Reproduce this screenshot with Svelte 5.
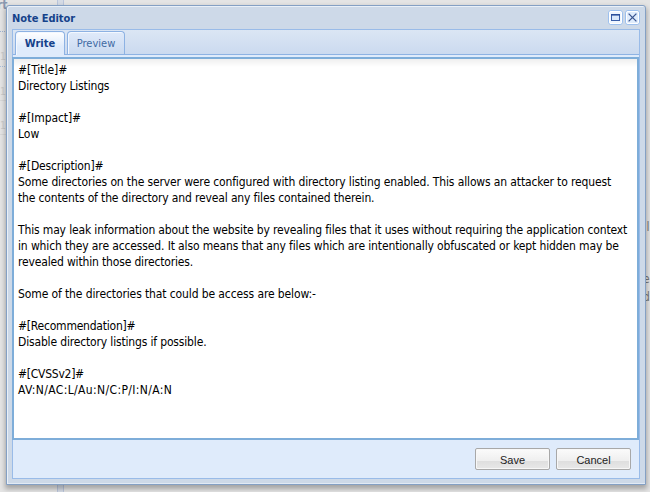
<script>
  // Each line carries the tracking that keeps its advance close to Tahoma's.
  const lines = [
    ['#[Title]#', -0.05],
    ['Directory Listings', -0.17],
    ['', 0],
    ['#[Impact]#', -0.08],
    ['Low', 0],
    ['', 0],
    ['#[Description]#', -0.18],
    ['Some directories on the server were configured with directory listing enabled. This allows an attacker to request', -0.132],
    ['the contents of the directory and reveal any files contained therein.', -0.145],
    ['', 0],
    ['This may leak information about the website by revealing files that it uses without requiring the application context', -0.143],
    ['in which they are accessed. It also means that any files which are intentionally obfuscated or kept hidden may be', -0.13],
    ['revealed within those directories.', -0.16],
    ['', 0],
    ['Some of the directories that could be access are below:-', -0.11],
    ['', 0],
    ['#[Recommendation]#', -0.22],
    ['Disable directory listings if possible.', -0.16],
    ['', 0],
    ['#[CVSSv2]#', -0.25],
    ['AV:N/AC:L/Au:N/C:P/I:N/A:N', 0.37]
  ];
</script>

<div class="page">
  <div class="behind">
    <div class="sidebar">
      <div class="heading">rt</div>
      <div class="row first">11</div>
      <div class="row">11</div>
      <div class="row">12</div>
    </div>
    <div class="splitter"></div>
    <div class="content">
      <span class="cut one">.ll</span>
      <span class="cut two">e</span>
      <span class="cut three">d</span>
    </div>
  </div>

  <div class="window">
    <header>
      <h1>Note Editor</h1>
      <div class="tools">
        <svg width="15" height="15" viewBox="0 0 15 15">
          <rect x=".5" y=".5" width="14" height="14" rx="2.5" fill="#eff6ff" stroke="#9dc0ee" />
          <rect x="1.5" y="1.5" width="12" height="12" rx="1.5" fill="none" stroke="#fff" />
          <rect x="3.5" y="4.5" width="8" height="6" fill="#d9e8fb" stroke="#3a5ea8" />
          <path d="M3 4.8h9" stroke="#2b4f9c" stroke-width="1.6" />
        </svg>
        <svg width="15" height="15" viewBox="0 0 15 15">
          <rect x=".5" y=".5" width="14" height="14" rx="2.5" fill="#dfecfc" stroke="#9dc0ee" />
          <rect x="1.5" y="1.5" width="12" height="12" rx="1.5" fill="none" stroke="#fff" />
          <path d="M3.6 3.6l7.8 7.8M11.4 3.6l-7.8 7.8" stroke="#3a5590" stroke-width="1.3" />
        </svg>
      </div>
    </header>
    <div class="body">
      <nav>
        <button class="tab active">Write</button>
        <button class="tab">Preview</button>
      </nav>
      <div class="editor">
        {#each lines as [text, tracking]}
          <div class="line" style="letter-spacing: {tracking}px">{text}</div>
        {/each}
      </div>
      <footer>
        <button class="action">Save</button>
        <button class="action">Cancel</button>
      </footer>
    </div>
  </div>
</div>

<style>
  :global(body) { margin: 0; overflow: hidden; }
  * { box-sizing: border-box; }
  button { margin: 0; padding: 0; }
  .page {
    position: relative;
    width: 650px;
    height: 492px;
    overflow: hidden;
    background: #e4e4e4;
    font-family: "DejaVu Sans Condensed", "DejaVu Sans", sans-serif;
    font-stretch: condensed;
  }
  .behind { display: flex; height: 492px; }
  .sidebar { width: 57px; color: #cbcbcb; font-size: 10px; }
  .heading {
    height: 32px;
    margin-left: -3px;
    font-size: 12px;
    font-weight: bold;
    line-height: 10px;
    color: #8a98b0;
    border-bottom: 1px dotted #9fb4d2;
  }
  .row { height: 34px; padding-top: 18px; line-height: 14px; border-bottom: 1px solid #d8d8d8; }
  .row.first { height: 35px; border-bottom: 1px dotted #a9bfdc; }
  .splitter { width: 7px; background: #d5dbe5; border: solid #b9c5dc; border-width: 0 1px; }
  .content { position: relative; flex: 1; font-size: 12px; color: #777; }
  .cut { position: absolute; left: 579px; }
  .one { top: 220px; }
  .two { top: 272px; }
  .three { top: 290px; }

  .window {
    position: absolute;
    left: 6px;
    top: 5px;
    width: 640px;
    height: 480px;
    display: flex;
    flex-direction: column;
    padding: 0 5px 5px;
    border: 1px solid #84a0c4;
    border-radius: 3px 3px 0 0;
    background: #cdd9e8;
    box-shadow: inset 1px 1px #e9f0f8, inset 0 -1px #e1eaf5, 0 3px 5px 1px rgba(0, 0, 0, .28);
  }
  header { display: flex; height: 23px; justify-content: space-between; }
  h1 { margin: 0; font-size: 11px; line-height: 25px; color: #15428b; letter-spacing: -.05px; }
  .tools { display: flex; gap: 2px; padding: 4px 0 0; }
  svg { display: block; }
  .body {
    flex: 1;
    display: flex;
    flex-direction: column;
    border: 1px solid #99bbe8;
    background: #dfebfb;
  }
  nav {
    display: flex;
    gap: 2px;
    align-items: flex-end;
    height: 25px;
    padding-left: 2px;
    border-bottom: 1px solid #8db2e3;
    background: linear-gradient(#dbe6f4, #cbdaef);
    flex: none;
  }
  .tab {
    height: 23px;
    width: 58px;
    padding-top: 1px;
    border: 1px solid #8db2e3;
    border-bottom: 0;
    border-radius: 4px 4px 0 0;
    background: linear-gradient(#e0eafa, #cadaf0);
    font: 11px/20px "DejaVu Sans Condensed", "DejaVu Sans", sans-serif;
    font-stretch: condensed;
    color: #416aa3;
    box-shadow: inset 1px 1px #f3f8ff;
  }
  .tab.active {
    height: 24px;
    width: 50px;
    padding-top: 0;
    margin-bottom: -1px;
    background: linear-gradient(#fff, #dfebfb 65%);
    font-weight: bold;
    color: #15428b;
  }
  .editor {
    height: 383px;
    margin: 2px 0 0 -1px;
    width: 627px;
    padding: 3px 0 0 4px;
    border: 2px solid #7eadd9;
    background: linear-gradient(#efefef, #fff 8px);
    color: #000;
    font-size: 12px;
  }
  .line { height: 16px; line-height: 16px; white-space: pre; }
  footer { display: flex; justify-content: flex-end; gap: 6px; padding: 8px 8px 0 0; }
  .action {
    width: 75px;
    height: 22px;
    border: 1px solid #a8a8a8;
    border-radius: 2px;
    background: linear-gradient(#fbfbfb, #efefef 58%, #dedede 59%, #e8e8e8);
    box-shadow: inset 0 0 0 1px #f7f7f7;
    font: 11px/22px "Liberation Sans", Arial, sans-serif;
    color: #222;
  }
</style>
